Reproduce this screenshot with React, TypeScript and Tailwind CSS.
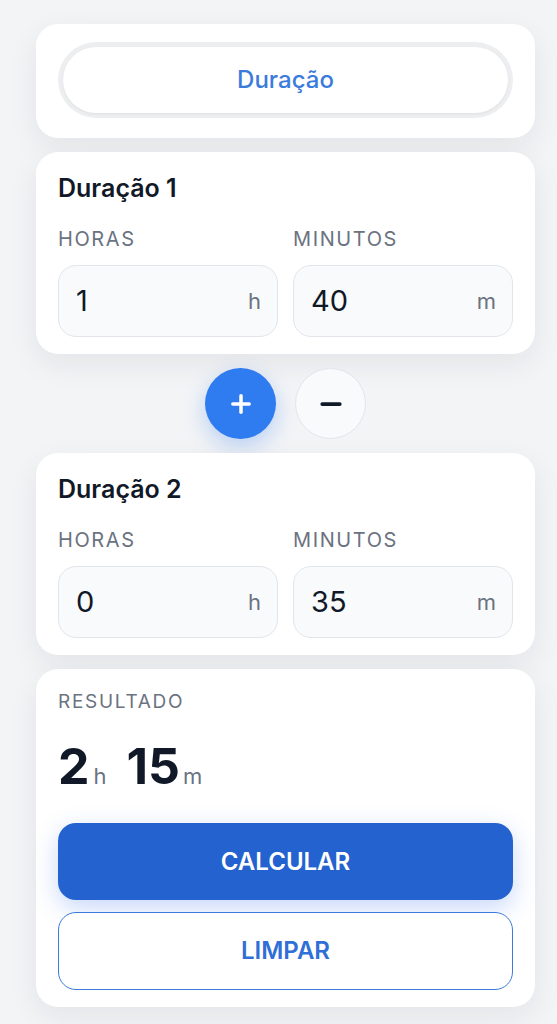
import { Plus, Minus } from "lucide-react";

function Field({ label, value, unit }: { label: string; value: string; unit: string }) {
  return (
    <div className="flex flex-col">
      <div className="text-[20px] tracking-[0.08em] text-[#6b7280] leading-none mb-[16px]">{label}</div>
      <div className="flex h-[72px] items-center justify-between rounded-[18px] border border-[#e2e5ea] bg-[#f8fafc] pl-[17px] pr-[16px]">
        <span className="text-[29px] text-[#111827]">{value}</span>
        <span className="text-[22px] text-[#6b7280]">{unit}</span>
      </div>
    </div>
  );
}

function DurationCard({ title, h, m }: { title: string; h: string; m: string }) {
  return (
    <div className="rounded-[22px] bg-white px-[22px] pt-[24px] pb-[17px] shadow-[0_10px_30px_rgba(15,23,42,0.07)]">
      <div className="text-[25px] font-semibold text-[#111827] leading-none mb-[28px]">{title}</div>
      <div className="grid grid-cols-2 gap-[15px]">
        <Field label="HORAS" value={h} unit="h" />
        <Field label="MINUTOS" value={m} unit="m" />
      </div>
    </div>
  );
}

export default function App() {
  return (
    <div
      className="min-h-screen bg-[#f3f4f6] pl-[36px] pr-[22px] py-[24px]"
      style={{ fontFamily: "Inter, 'Noto Sans', sans-serif" }}
    >
      <div className="flex flex-col gap-[14px]">
        <div className="rounded-[22px] bg-white px-[22px] pt-[18px] pb-[20px] shadow-[0_10px_30px_rgba(15,23,42,0.07)]">
          <div className="rounded-full bg-[#eceef0] p-[5px]">
            <div className="flex h-[66px] items-center justify-center rounded-full bg-white shadow-[0_1px_3px_rgba(0,0,0,0.06)]">
              <span className="text-[24px] font-medium text-[#3a7bdc]">Duração</span>
            </div>
          </div>
        </div>

        <DurationCard title="Duração 1" h="1" m="40" />

        <div className="flex justify-center gap-[19px]">
          <button className="flex h-[71px] w-[71px] items-center justify-center rounded-full bg-[#2f7bf0] text-white shadow-[0_8px_22px_rgba(47,123,240,0.3)]">
            <Plus size={28} strokeWidth={3} />
          </button>
          <button className="flex h-[71px] w-[71px] items-center justify-center rounded-full border border-[#e2e5ea] bg-[#f8fafc] text-[#111827]">
            <Minus size={30} strokeWidth={3} />
          </button>
        </div>

        <DurationCard title="Duração 2" h="0" m="35" />

        <div className="rounded-[22px] bg-white px-[22px] pt-[23px] pb-[17px] shadow-[0_10px_30px_rgba(15,23,42,0.07)]">
          <div className="text-[19px] tracking-[0.09em] text-[#6b7280] leading-none">RESULTADO</div>
          <div className="mt-[30px] flex items-baseline text-[#111827]">
            <span className="text-[50px] font-bold leading-none">2</span>
            <span className="ml-[4px] text-[22px] text-[#6b7280] leading-none">h</span>
            <span className="ml-[20px] text-[50px] font-bold leading-none">15</span>
            <span className="ml-[3px] text-[22px] text-[#6b7280] leading-none">m</span>
          </div>
          <button className="mt-[32px] flex h-[77px] w-full items-center justify-center rounded-[18px] bg-[#2462cf] text-[24px] font-semibold text-white shadow-[0_8px_24px_rgba(37,99,235,0.25)]">
            CALCULAR
          </button>
          <button className="mt-[12px] flex h-[78px] w-full items-center justify-center rounded-[18px] border-[1.5px] border-[#3a7bdc] bg-white text-[24px] font-semibold text-[#2f6fd6]">
            LIMPAR
          </button>
        </div>
      </div>
    </div>
  );
}
